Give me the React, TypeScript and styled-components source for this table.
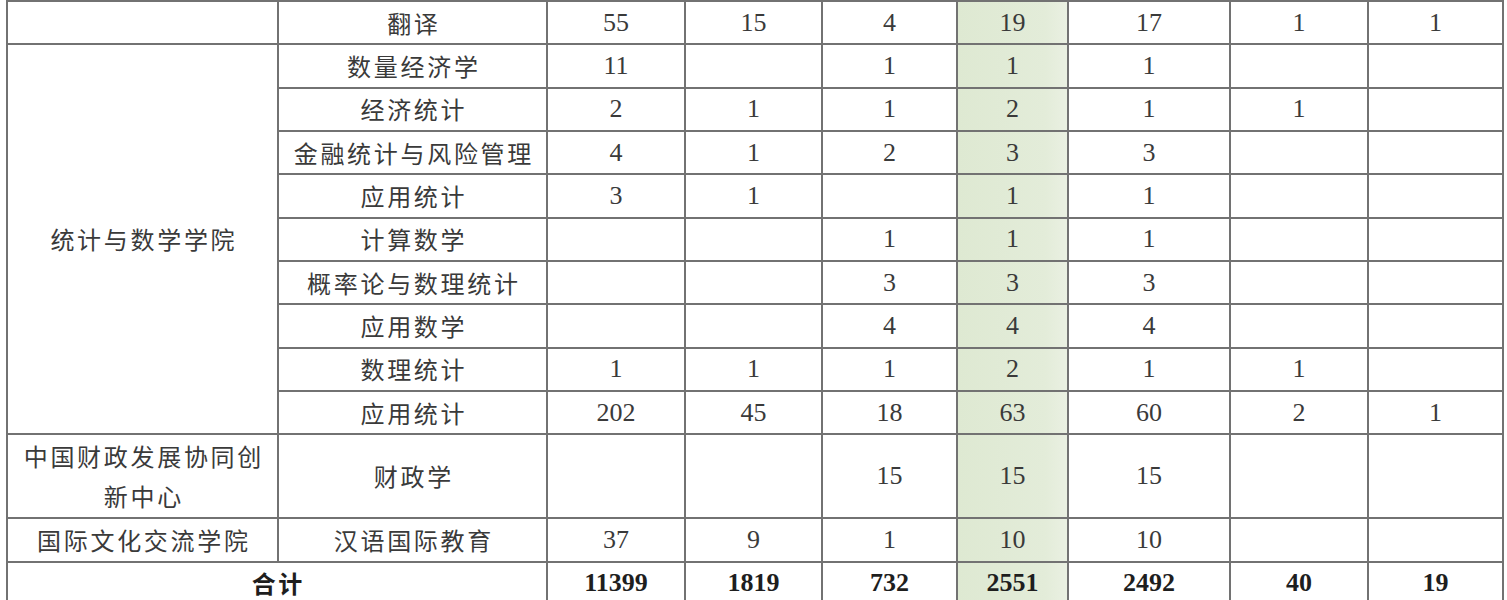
import React from "react";
import styled, { createGlobalStyle, css } from "styled-components";

const Global = createGlobalStyle`
  html, body { margin: 0; padding: 0; background: #ffffff; overflow: hidden; }
  #root { width: 1507px; }
`;

const Page = styled.div`
  padding: 0 0 0 6px;
  width: 1507px;
  height: 600px;
  overflow: hidden;
  box-sizing: border-box;
`;

const Table = styled.table`
  border-collapse: collapse;
  table-layout: fixed;
  width: 1496px;
  margin-top: 0;
`;

const Row = styled.tr<{ $h?: number }>`
  height: ${(p) => p.$h ?? 43.35}px;
`;

const Cell = styled.td<{ $num?: boolean; $hl?: boolean; $total?: boolean; $tall?: boolean }>`
  border: 2px solid #727272;
  padding: 0;
  text-align: center;
  vertical-align: middle;
  color: #3a3a3a;
  white-space: nowrap;
  ${(p) =>
    p.$num
      ? css`
          font-family: "Liberation Serif", "Times New Roman", serif;
          font-size: 26px;
          line-height: 30px;
        `
      : css`
          font-family: "Noto Sans CJK SC", "Noto Sans", sans-serif;
          font-size: 24px;
          letter-spacing: 2.7px;
          padding-left: 2.7px;
          line-height: ${p.$tall ? 40.5 : 32}px;
        `}
  ${(p) =>
    p.$hl &&
    css`
      background: linear-gradient(to right, #dee9d2 0%, #e3ecd9 80%, #eaf0e2 100%);
    `}
  ${(p) =>
    p.$total &&
    css`
      font-weight: 700;
      color: #1e1e1e;
    `}
`;

const widths = [271, 269, 138, 137, 135, 111, 162, 138, 135];

type Vals = (number | "")[];

const statsRows: [string, Vals][] = [
  ["数量经济学", [11, "", 1, 1, 1, "", ""]],
  ["经济统计", [2, 1, 1, 2, 1, 1, ""]],
  ["金融统计与风险管理", [4, 1, 2, 3, 3, "", ""]],
  ["应用统计", [3, 1, "", 1, 1, "", ""]],
  ["计算数学", ["", "", 1, 1, 1, "", ""]],
  ["概率论与数理统计", ["", "", 3, 3, 3, "", ""]],
  ["应用数学", ["", "", 4, 4, 4, "", ""]],
  ["数理统计", [1, 1, 1, 2, 1, 1, ""]],
  ["应用统计", [202, 45, 18, 63, 60, 2, 1]],
];

const Nums: React.FC<{ vals: Vals; total?: boolean }> = ({ vals, total }) => (
  <>
    {vals.map((v, i) => (
      <Cell key={i} $num $hl={i === 3} $total={total}>
        {v}
      </Cell>
    ))}
  </>
);

export default function App() {
  return (
    <>
      <Global />
      <Page>
        <Table>
          <colgroup>
            {widths.map((w, i) => (
              <col key={i} style={{ width: w }} />
            ))}
          </colgroup>
          <tbody>
            <Row>
              <Cell />
              <Cell>翻译</Cell>
              <Nums vals={[55, 15, 4, 19, 17, 1, 1]} />
            </Row>
            {statsRows.map(([major, vals], i) => (
              <Row key={i}>
                {i === 0 && <Cell rowSpan={statsRows.length}>统计与数学学院</Cell>}
                <Cell>{major}</Cell>
                <Nums vals={vals} />
              </Row>
            ))}
            <Row $h={84}>
              <Cell $tall>
                中国财政发展协同创
                <br />
                新中心
              </Cell>
              <Cell>财政学</Cell>
              <Nums vals={["", "", 15, 15, 15, "", ""]} />
            </Row>
            <Row>
              <Cell>国际文化交流学院</Cell>
              <Cell>汉语国际教育</Cell>
              <Nums vals={[37, 9, 1, 10, 10, "", ""]} />
            </Row>
            <Row>
              <Cell colSpan={2} $total>
                合计
              </Cell>
              <Nums vals={[11399, 1819, 732, 2551, 2492, 40, 19]} total />
            </Row>
          </tbody>
        </Table>
      </Page>
    </>
  );
}
